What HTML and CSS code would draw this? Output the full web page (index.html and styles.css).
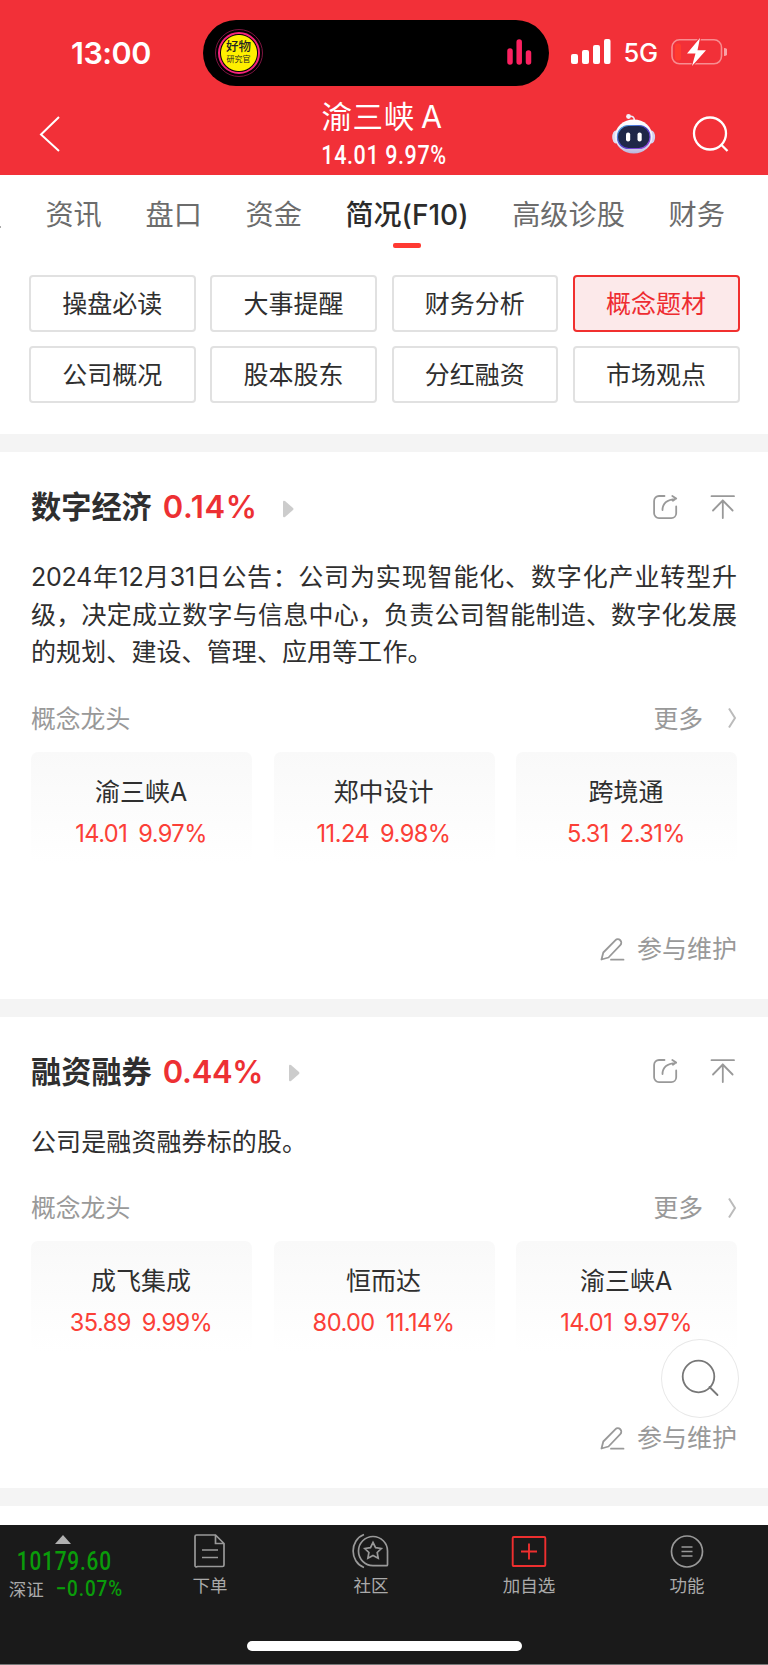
FILE: index.html
```html
<!DOCTYPE html>
<html lang="zh-CN">
<head>
<meta charset="utf-8">
<title>渝三峡A</title>
<link rel="stylesheet" href="styles.css">
</head>
<body>
<svg class="defs" width="0" height="0">
  <symbol id="share" viewBox="0 0 28 28"><path d="M13.500 3H8a4.900 4.900 0 0 0-4.900 4.900v12.300A4.900 4.900 0 0 0 8 25.100h12.300a4.900 4.900 0 0 0 4.900-4.900V13.500M11.500 17C11.500 10.500 16 6.500 25 5.800M21.300 3l3.900 2.600-3.300 2.200"/></symbol>
  <symbol id="top" viewBox="0 0 28 28"><path d="M2.500 3.200h22.500M13.800 25V7.500M4 17.500l9.800-10 9.800 10"/></symbol>
  <symbol id="pen" viewBox="0 0 26 26"><path d="M2.500 23.500l1.800-7L16.300 4.300a3.500 3.500 0 0 1 5 4.900L9.500 21.500zM12 23.700h12.500"/></symbol>
  <symbol id="more" viewBox="0 0 10 22"><path d="M2 1.500L8 11 2 20.500"/></symbol>
</svg>
<div class="screen">
  <header class="header">
    <div class="status">
      <div class="time">13:00</div>
      <div class="island">
        <div class="badge"><div class="disc"><span class="d1">好物</span><span class="d2">研究官</span></div></div>
        <svg width="26" height="28" viewBox="0 0 26 28" class="bars"><path d="M4 12v11M13.200 3v20M22.500 14v9"/></svg>
      </div>
      <div class="net">
        <svg width="40" height="26" viewBox="0 0 40 26" fill="#fff"><rect x="0" y="15" width="7" height="10" rx="2"/><rect x="11" y="11" width="7" height="14" rx="2"/><rect x="22" y="6" width="7" height="19" rx="2"/><rect x="33" y="0" width="6.500" height="25" rx="2"/></svg>
        <span class="g5">5G</span>
        <svg width="56" height="28" viewBox="0 0 56 28"><rect x="1" y="1.800" width="49.500" height="24" rx="7.500" fill="none" stroke="#fff" stroke-opacity=".45" stroke-width="1.600"/><rect x="4" y="5.500" width="6" height="17" rx="2.500" fill="#ff3b2f"/><path d="M53 10v8a4 4 0 0 0 0-8z" fill="#fff" fill-opacity=".55"/><path d="M29 0L16 15.500h8.500L21 28 35 12.200h-8.500z" fill="#fff" stroke="#f23038" stroke-width="2" paint-order="stroke"/></svg>
      </div>
    </div>
    <div class="nav">
      <svg class="back" width="22" height="40" viewBox="0 0 22 40"><path d="M20 3L2 20.500 20 37"/></svg>
      <div class="title"><div class="name">渝三峡 A</div><div class="quote">14.01 9.97%</div></div>
      <div class="tools">
        <svg width="44" height="42" viewBox="0 0 44 42">
          <defs><linearGradient id="helm" x1="0" y1="0" x2="0" y2="1"><stop offset="0" stop-color="#fff"/><stop offset=".65" stop-color="#ececf8"/><stop offset="1" stop-color="#b9b5dc"/></linearGradient><linearGradient id="rim" x1="0" y1="0" x2="1" y2="1"><stop offset="0" stop-color="#4fb4e8"/><stop offset=".5" stop-color="#4c3fc8"/><stop offset="1" stop-color="#a04be0"/></linearGradient></defs>
          <path d="M17 3.500c4-.8 5.500 1 5.300 4" fill="none" stroke="#eceaf6" stroke-width="1.600"/><circle cx="16.500" cy="3.500" r="2.400" fill="#f3f1fa"/>
          <ellipse cx="3.800" cy="24" rx="3.600" ry="6.500" fill="#dcdaf0"/><ellipse cx="39.500" cy="24" rx="3.600" ry="6.500" fill="#d2cfee"/>
          <ellipse cx="21.700" cy="23.500" rx="18.800" ry="17" fill="url(#helm)"/>
          <rect x="5.500" y="12.500" width="32.500" height="23" rx="11" fill="#1f2748" stroke="url(#rim)" stroke-width="1.200"/>
          <rect x="14" y="19.500" width="4.200" height="9" rx="2" fill="#fff"/><rect x="25.500" y="19.500" width="4.200" height="9" rx="2" fill="#fff"/>
        </svg>
        <svg width="38" height="38" viewBox="0 0 38 38" class="find"><circle cx="18" cy="18.500" r="16"/><path d="M29 29.500l6.500 6.500"/></svg>
      </div>
    </div>
  </header>

  <nav class="tabs">
    <span class="speck"></span><span class="tab">资讯</span><span class="tab">盘口</span><span class="tab">资金</span><span class="tab on">简况(F10)</span><span class="tab">高级诊股</span><span class="tab">财务</span>
  </nav>

  <div class="chips">
    <div class="chip">操盘必读</div><div class="chip">大事提醒</div><div class="chip">财务分析</div><div class="chip active">概念题材</div>
    <div class="chip">公司概况</div><div class="chip">股本股东</div><div class="chip">分红融资</div><div class="chip">市场观点</div>
  </div>

  <section class="concept">
    <div class="head"><h2>数字经济</h2><span class="pct loose">0.14%</span><svg class="play" width="11" height="18" viewBox="0 0 11 18"><path d="M0 2Q0 0 2 1L10 8Q11 9 10 10L2 17Q0 18 0 16z"/></svg><span class="acts"><svg class="ico"><use href="#share"/></svg><svg class="ico"><use href="#top"/></svg></span></div>
    <div class="body"><div class="just"><span class="date">2024年12月31日公告：</span>公司为实现智能化、数字化产业转型升</div><div class="just">级，决定成立数字与信息中心，负责公司智能制造、数字化发展</div><div>的规划、建设、管理、应用等工作。</div></div>
    <div class="lead"><span>概念龙头</span><span class="more">更多<svg class="chev" width="10" height="22"><use href="#more"/></svg></span></div>
    <div class="cards">
      <div class="card"><b>渝三峡A</b><i>14.01<em>9.97%</em></i></div>
      <div class="card"><b>郑中设计</b><i>11.24<em>9.98%</em></i></div>
      <div class="card"><b>跨境通</b><i>5.31<em>2.31%</em></i></div>
    </div>
    <div class="edit"><svg class="pen"><use href="#pen"/></svg>参与维护</div>
  </section>

  <section class="concept">
    <div class="head"><h2>融资融券</h2><span class="pct">0.44%</span><svg class="play" width="11" height="18" viewBox="0 0 11 18"><path d="M0 2Q0 0 2 1L10 8Q11 9 10 10L2 17Q0 18 0 16z"/></svg><span class="acts"><svg class="ico"><use href="#share"/></svg><svg class="ico"><use href="#top"/></svg></span></div>
    <div class="body"><div>公司是融资融券标的股。</div></div>
    <div class="lead"><span>概念龙头</span><span class="more">更多<svg class="chev" width="10" height="22"><use href="#more"/></svg></span></div>
    <div class="cards">
      <div class="card"><b>成飞集成</b><i>35.89<em>9.99%</em></i></div>
      <div class="card"><b>恒而达</b><i>80.00<em>11.14%</em></i></div>
      <div class="card"><b>渝三峡A</b><i>14.01<em>9.97%</em></i></div>
    </div>
    <div class="edit"><svg class="pen"><use href="#pen"/></svg>参与维护</div>
  </section>
  <div class="tail"></div>

  <footer class="footer">
    <div class="index">
      <svg width="16" height="9" viewBox="0 0 16 9"><path d="M8 0l8 9H0z" fill="#b0b0b0"/></svg>
      <div class="val">10179.60</div>
      <div class="chg"><span>深证</span><span class="neg">−0.07%</span></div>
    </div>
    <div class="item order"><svg width="36" height="36" viewBox="0 0 36 36"><path d="M4.500 2h19L32 10.500V32a1.500 1.500 0 0 1-1.500 1.500h-25A1.500 1.500 0 0 1 3 32V3.500A1.500 1.500 0 0 1 4.500 2zM23.500 2v8.500H32M10 17h16M10 24.500h16"/></svg>下单</div>
    <div class="item social"><svg width="38" height="36" viewBox="0 0 38 36"><path d="M12 1.500C-2.500 7-2.500 29 12 34.500M21 3.500c-8 0-14.500 6.500-14.500 14.500S13 32.700 21 32.700h13.500a1 1 0 0 0 1-1V18c0-8-6.500-14.500-14.500-14.500zM21 9.500l2.600 5.200 5.700.8-4.100 4 1 5.700-5.200-2.700-5.100 2.700 1-5.700-4.100-4 5.700-.8z"/></svg>社区</div>
    <div class="item add"><svg width="36" height="36" viewBox="0 0 36 36"><rect x="1.700" y="4" width="32.600" height="29" rx="1"/><path d="M18 10.500v16M10 18.500h16"/></svg>加自选</div>
    <div class="item menu"><svg width="36" height="36" viewBox="0 0 36 36"><circle cx="18" cy="18.500" r="15.500"/><path d="M12.500 14h11M12.500 18.500h11M12.500 23h11"/></svg>功能</div>
    <div class="home"></div>
  </footer>
  <div class="fab"><svg width="40" height="40" viewBox="0 0 40 40"><circle cx="18.500" cy="18.500" r="15.800"/><path d="M29.500 29l8 8"/></svg></div>
</div>
</body>
</html>
```
FILE: styles.css
```css
* { box-sizing: border-box; }
body { margin: 0; background: #fff; font-family: Inter, "Noto Sans CJK SC", sans-serif; color: #2f2f2f; }
svg { display: block; flex: none; }
.defs { position: absolute; }
.screen { position: relative; width: 768px; height: 1665px; overflow: hidden; }

.header { height: 174.500px; background: #f23038; color: #fff; }
.status { height: 86px; padding-top: 20px; display: flex; }
.time { width: 202.500px; padding-left: 71px; font-size: 30.500px; font-weight: 600; line-height: 65px; letter-spacing: -.5px; }
.island { width: 346px; height: 66px; border-radius: 33px; background: #000; display: flex; align-items: center; justify-content: space-between; padding: 0 17px 0 12px; }
.badge { width: 48px; height: 48px; border-radius: 50%; border: 1px solid #7d1440; padding: 2px; }
.disc { width: 42px; height: 42px; border-radius: 50%; border: 2px solid #f5257c; background: radial-gradient(circle, #ffef00 17.500px, #000 18.500px); display: flex; flex-direction: column; align-items: center; color: #222; white-space: nowrap; font-family: "Noto Sans CJK SC", sans-serif; }
.d1 { font-size: 12.500px; line-height: 14px; margin-top: 4.500px; font-weight: 500; }
.d2 { font-size: 8px; line-height: 12px; }
.bars { fill: none; stroke: #fb2160; stroke-width: 5.500; stroke-linecap: round; }
.net { display: flex; align-items: center; padding-left: 22.500px; height: 64px; }
.g5 { font-size: 25.500px; font-weight: 500; margin: 1px 13.500px 0 12.500px; width: 34px; letter-spacing: -.3px; line-height: 30px; }
.nav { height: 88px; display: grid; grid-template-columns: 200px 1fr 200px; }
.back { margin: 28px 0 0 39px; fill: none; stroke: #fff; stroke-width: 2; }
.title { text-align: center; padding-right: 4px; }
.name { font-size: 30.500px; line-height: 34px; margin-top: 13.500px; letter-spacing: .6px; word-spacing: -3px; }
.quote { font: 500 25px/30px Roboto, sans-serif; margin: 7px -4px 0 0; letter-spacing: .7px; transform: scaleX(.86); }
.tools { display: flex; gap: 36px; padding: 27px 0 0 44px; }
.find { margin-top: 2px; fill: none; stroke: #fff; stroke-width: 2.300; }

.tabs { height: 100.500px; padding: 19px 0 0; display: flex; gap: 43.700px; font-size: 28.200px; line-height: 42px; color: #6c6c6c; white-space: nowrap; }
.tab { flex: none; }
.speck { width: 1px; height: 2px; margin: 32px .7px 0 0; background: #aaa; }
.on { color: #2b2b2b; font-weight: 500; font-size: 28px; display: flex; flex-direction: column; align-items: center; }
.on::after { content: ""; width: 28px; height: 5.500px; margin-top: 7px; border-radius: 2px; background: #ff3a32; }

.chips { height: 159px; padding: 0 28.500px 0 29px; display: grid; grid-template-columns: repeat(4, 1fr); grid-auto-rows: 57px; gap: 14px 14.500px; align-content: start; }
.chip { border: 2px solid #e1e1e1; border-radius: 4px; display: flex; align-items: center; justify-content: center; padding-bottom: 4px; font-size: 25px; }
.active { color: #ee2c31; border-color: #f1302f; background: #fce9ea; }

.concept { border-top: 18px solid #f4f4f4; padding: 36px 31px 0; height: 564.500px; display: flex; flex-direction: column; }
.concept + .concept { height: 489.500px; }
.head { display: flex; align-items: center; height: 38px; }
h2 { margin: 0 11px 0 0; font-size: 30.200px; line-height: 38px; font-weight: 700; }
.pct { color: #ed3033; font-size: 31px; font-weight: 600; line-height: 38px; letter-spacing: -.3px; }
.loose { letter-spacing: .6px; }
.play { margin: 3px 0 0 25.500px; fill: #ccc; }
.acts { margin: 0 0 1px auto; display: flex; gap: 30px; }
.ico { width: 28px; height: 28px; }
.acts, .pen { fill: none; stroke: #999; stroke-width: 1.800; stroke-linecap: round; stroke-linejoin: round; }
.body { margin-top: 33px; font-size: 25px; line-height: 37.500px; letter-spacing: .1px; white-space: nowrap; }
.just { text-align: justify; text-align-last: justify; letter-spacing: 0; }
.date { letter-spacing: -.25px; }
.lead { margin-top: 27px; height: 36px; display: flex; align-items: center; justify-content: space-between; font-size: 24.800px; color: #999; }
.more { display: flex; align-items: center; gap: 24px; }
.chev { margin-top: 3px; fill: none; stroke: #bbb; stroke-width: 2; }
.cards { margin-top: 17px; display: grid; grid-template-columns: repeat(3, 1fr); gap: 21.500px; }
.card { height: 111px; border-radius: 7px; background: linear-gradient(#f9f9f9, #fff); text-align: center; padding: 21px 1px 0 0; }
.card b { display: block; font-weight: 400; font-size: 25px; line-height: 38px; }
.card i { display: block; font-style: normal; color: #fb4037; font-size: 23.600px; line-height: 30px; margin-top: 8px; letter-spacing: -.55px; }
.card em { font-style: normal; margin-left: 11px; }
.edit { margin-top: 65px; height: 38px; display: flex; align-items: center; justify-content: flex-end; font-size: 25px; color: #999; }
.pen { width: 26px; height: 26px; margin: 4px 12px 0 0; }
.tail { height: 37px; border-top: 18px solid #f4f4f4; }

.footer { position: absolute; left: 0; top: 1525px; width: 768px; height: 140px; background: #1a1a1a; border-bottom: 1px solid #777; display: grid; grid-template-columns: 126px 168px 154px 162px 154px; color: #aaa; font-size: 17.500px; }
.index { display: flex; flex-direction: column; align-items: center; padding-top: 9.500px; font-family: Roboto, "Noto Sans CJK SC", sans-serif; white-space: nowrap; }
.val { color: #0a9c0a; font-size: 26px; font-weight: 500; line-height: 28px; margin: 3px 0 0 3px; letter-spacing: 1px; transform: scaleX(.8); }
.chg { display: flex; gap: 7px; line-height: 24px; margin: 3px 0 0 10px; }
.neg { color: #0a9c0a; font-size: 21.500px; font-weight: 500; letter-spacing: 1px; line-height: 22px; transform: scaleX(.88); }
.item { display: flex; flex-direction: column; align-items: center; padding-top: 8px; line-height: 26px; gap: 4px; }
.item svg { fill: none; stroke: #999; stroke-width: 1.700; }
.add svg { stroke: #ee2f2f; stroke-width: 1.900; }
.home { position: absolute; left: 246.500px; top: 116px; width: 275px; height: 10px; border-radius: 5px; background: #fff; }
.fab { position: absolute; left: 661px; top: 1339px; width: 78px; height: 79px; border-radius: 50%; background: #fff; border: 1.500px solid #e8e8e8; padding: 17.500px 0 0 18px; }
.fab svg { fill: none; stroke: #777; stroke-width: 1.800; stroke-linecap: round; }
```
